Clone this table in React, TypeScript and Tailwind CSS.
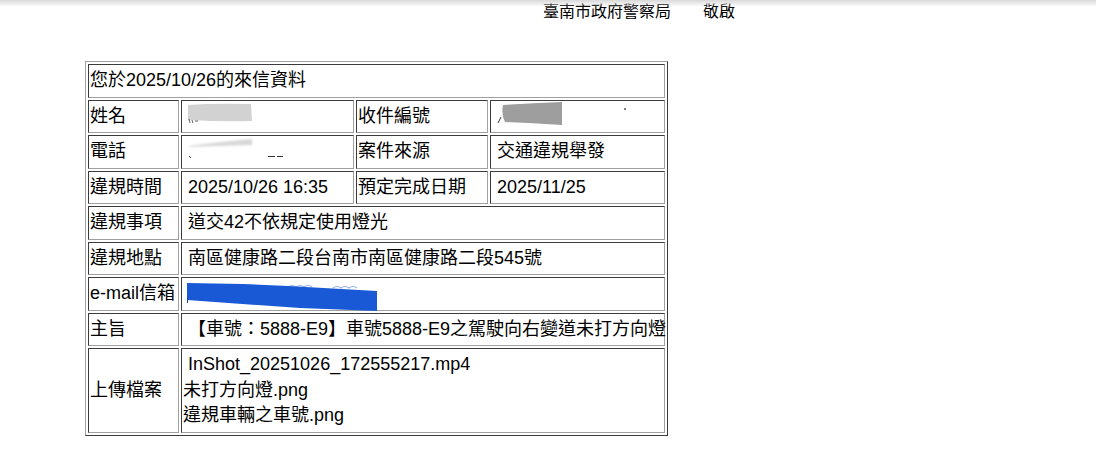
import React from "react";

const font = "font-['Liberation_Sans','Noto_Sans_CJK_TC',sans-serif]";
const td =
  "border border-t-[#3c3c3c] border-l-[#3c3c3c] border-r-[#a0a0a0] border-b-[#a0a0a0] px-[1px] py-[3px] align-middle whitespace-nowrap";

function NameBlob() {
  return (
    <svg className="block h-[25.5px] w-[170px] overflow-visible" viewBox="0 0 170 25.5">
      <defs>
        <filter id="soft1" x="-20%" y="-40%" width="140%" height="180%">
          <feGaussianBlur stdDeviation="0.7" />
        </filter>
      </defs>
      <path d="M5 1 Q30 -1 68 0 L69 17 Q40 18 5 16 Z" fill="#d2d2d2" filter="url(#soft1)" />
      <path d="M6 15 l1 4 M9 16 l1 3 M12 17 h3" stroke="#666" strokeWidth="1" />
    </svg>
  );
}

function PhoneBlob() {
  return (
    <svg className="block h-[25.5px] w-[170px] overflow-visible" viewBox="0 0 170 25.5">
      <defs>
        <filter id="soft2" x="-20%" y="-80%" width="140%" height="260%">
          <feGaussianBlur stdDeviation="0.8" />
        </filter>
      </defs>
      <path d="M6 7 Q35 3 69 0 L69 6 Q35 7 6 8 Z" fill="#d8d8d8" filter="url(#soft2)" />
      <path d="M6 17 l2 2" stroke="#444" strokeWidth="1" />
      <path d="M85 17.5 h7 M94 17.5 h6" stroke="#333" strokeWidth="1.2" />
    </svg>
  );
}

function ReceiptBlob() {
  return (
    <svg className="block h-[25.5px] w-[170px] overflow-visible" viewBox="0 0 170 25.5">
      <defs>
        <filter id="soft3" x="-20%" y="-40%" width="140%" height="180%">
          <feGaussianBlur stdDeviation="0.6" />
        </filter>
      </defs>
      <path d="M11 1 Q40 -1 70 -2 L70 21 Q40 19 13 18 Q9 10 11 1 Z" fill="#9e9e9e" filter="url(#soft3)" />
      <path d="M6 19 l3 -6" stroke="#333" strokeWidth="1" />
      <circle cx="133" cy="5" r="0.9" fill="#444" />
    </svg>
  );
}

function EmailBlob() {
  return (
    <svg className="block h-[25.5px] w-[170px] overflow-visible" viewBox="0 0 170 25.5">
      <path d="M105 6 q4 -3 8 0 q4 -3 8 0 q4 -3 8 0 M150 7 q4 -3 8 0 q4 -3 8 0 q4 -3 8 0" stroke="#8fb0ea" strokeWidth="1.2" fill="none" />
      <path d="M4 2 L60 3 L105 5 L194 10 L194 30 L117 27 L4 19 Z" fill="#1a59d6" />
      <path d="M4.5 16 v6" stroke="#1646a8" strokeWidth="1" />
    </svg>
  );
}

export default function App() {
  const rows: [string, React.ReactNode, string, React.ReactNode][] = [
    ["姓名", <NameBlob />, "收件編號", <ReceiptBlob />],
    ["電話", <PhoneBlob />, "案件來源", "\u00a0交通違規舉發"],
    ["違規時間", "\u00a02025/10/26 16:35", "預定完成日期", "\u00a02025/11/25"],
  ];

  return (
    <main className={`relative w-[1096px] h-[456px] bg-white text-black overflow-hidden ${font}`}>
      <div className="absolute top-0 left-0 right-0 h-[7px] bg-linear-to-b from-[#d9d9d9] to-transparent" />
      <div className="ml-[543px] text-[16px] leading-[23px] whitespace-pre">臺南市政府警察局　　敬啟</div>
      <div className="mt-[38px] ml-[85px]">
        <table className="table-fixed w-[583px] border-separate border-spacing-[2px] border border-t-[#a0a0a0] border-l-[#a0a0a0] border-r-[#3c3c3c] border-b-[#3c3c3c] text-[18px] leading-[25.5px]">
          <colgroup>
            <col className="w-[91px]" />
            <col className="w-[173px]" />
            <col className="w-[132px]" />
            <col className="w-[175px]" />
          </colgroup>
          <tbody>
            <tr>
              <td colSpan={4} className={td}>
                您於2025/10/26的來信資料
              </td>
            </tr>
            {rows.map((r, i) => (
              <tr key={i}>
                <td className={td}>{r[0]}</td>
                <td className={td}>{r[1]}</td>
                <td className={td}>{r[2]}</td>
                <td className={td}>{r[3]}</td>
              </tr>
            ))}
            <tr>
              <td className={td}>違規事項</td>
              <td colSpan={3} className={td}>
                {"\u00a0道交42不依規定使用燈光"}
              </td>
            </tr>
            <tr>
              <td className={td}>違規地點</td>
              <td colSpan={3} className={td}>
                {"\u00a0南區健康路二段台南市南區健康路二段545號"}
              </td>
            </tr>
            <tr>
              <td className={td}>e-mail信箱</td>
              <td colSpan={3} className={td}>
                <EmailBlob />
              </td>
            </tr>
            <tr>
              <td className={td}>主旨</td>
              <td colSpan={3} className={td}>
                {"\u00a0【車號：5888-E9】車號5888-E9之駕駛向右變道未打方向燈"}
              </td>
            </tr>
            <tr>
              <td className={td}>上傳檔案</td>
              <td colSpan={3} className={td}>
                <div>{"\u00a0InShot_20251026_172555217.mp4"}</div>
                <div>未打方向燈.png</div>
                <div>違規車輛之車號.png</div>
              </td>
            </tr>
          </tbody>
        </table>
      </div>
    </main>
  );
}
